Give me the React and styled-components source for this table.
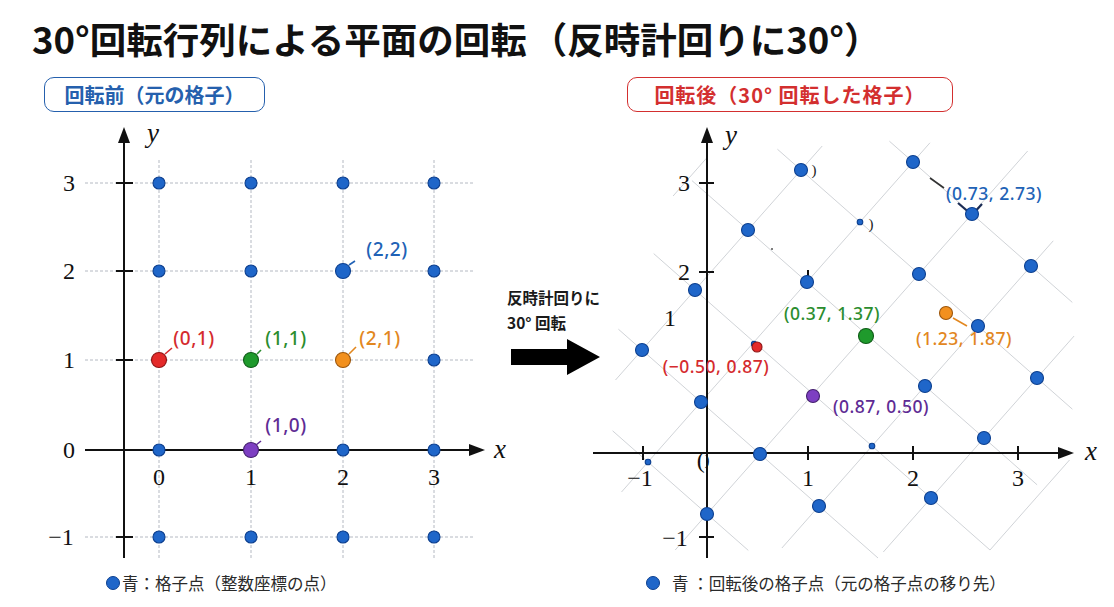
import React from "react";
import styled, { createGlobalStyle } from "styled-components";

const GlobalStyle = createGlobalStyle`
  html, body { margin: 0; padding: 0; background: #ffffff; }
  body { font-family: "Noto Sans CJK JP", "Noto Sans", sans-serif; }
`;

const TONES = {
  blue: { fill: "#1f66c9", stroke: "#0c3f8f", text: "#2162b6" },
  red: { fill: "#e42a2a", stroke: "#8e1414", text: "#d52b2e" },
  green: { fill: "#1f9a2c", stroke: "#0e5c16", text: "#2b8d2e" },
  orange: { fill: "#f2901e", stroke: "#9c560c", text: "#e2871f" },
  purple: { fill: "#7d3fc2", stroke: "#44206e", text: "#5e2b94" },
};

const Page = styled.div`
  width: 1114px;
  height: 607px;
  overflow: hidden;
  background: #ffffff;
`;

const Title = styled.h1`
  margin: 0;
  padding: 17px 0 0 32px;
  height: 77px;
  box-sizing: border-box;
  font-family: "Noto Sans CJK JP", sans-serif;
  font-size: 36.5px;
  line-height: 44px;
  font-weight: 700;
  color: #111111;
  white-space: nowrap;
`;

/* full-width opening bracket with the extra leading space the original shows */
const Open = styled.span`
  margin-left: ${(p) => p.$gap}px;
`;

const Stage = styled.div`
  display: grid;
  grid-template-columns: 495px 105px 514px;
`;

const Panel = styled.section`
  display: flex;
  flex-direction: column;
  align-items: flex-start;
`;

const Pill = styled.div`
  margin-left: ${(p) => p.$indent}px;
  width: ${(p) => p.$width}px;
  height: 35px;
  box-sizing: border-box;
  border: 1.5px solid ${(p) => p.$color};
  border-radius: 10px;
  display: flex;
  align-items: center;
  justify-content: center;
  color: ${(p) => p.$color};
  font-family: "Noto Sans CJK JP", sans-serif;
  font-size: 20px;
  font-weight: 700;
  letter-spacing: ${(p) => p.$spacing || 0}px;
  white-space: nowrap;
`;

const Chart = styled.svg`
  display: block;
  margin-top: 4px;
  overflow: visible;
`;

const Legend = styled.div`
  height: 30px;
  display: flex;
  align-items: center;
  gap: ${(p) => p.$gap}px;
  padding-left: ${(p) => p.$indent}px;
  font-family: "Noto Sans CJK JP", sans-serif;
  font-size: 16.5px;
  color: #2a2a2a;
  white-space: nowrap;
`;

const LegendDot = styled.span`
  width: 14px;
  height: 14px;
  border-radius: 50%;
  background: #1f66c9;
  border: 1px solid #0c3f8f;
  box-sizing: border-box;
  flex: none;
`;

const Middle = styled.div`
  display: flex;
  flex-direction: column;
  padding: 208px 0 0 12px;
`;

const Caption = styled.div`
  font-family: "Noto Sans CJK JP", sans-serif;
  font-size: 15.5px;
  line-height: 25px;
  font-weight: 700;
  color: #1a1a1a;
  white-space: nowrap;
`;

const ArrowSvg = styled.svg`
  display: block;
  margin: 2px 0 0 -2px;
`;

const GridLine = styled.line`
  stroke: #b4b9c2;
  stroke-width: 1;
  stroke-dasharray: 3 2;
`;

const LatticeLine = styled.line`
  stroke: #c8cbd0;
  stroke-width: 0.85;
`;

const Axis = styled.line`
  stroke: #111111;
  stroke-width: 2;
`;

const Tick = styled.line`
  stroke: #111111;
  stroke-width: 2;
`;

const Head = styled.polygon`
  fill: #111111;
`;

const Dot = styled.circle`
  fill: ${(p) => TONES[p.$tone].fill};
  stroke: ${(p) => TONES[p.$tone].stroke};
  stroke-width: 1.1;
`;

const Leader = styled.line`
  stroke: ${(p) => TONES[p.$tone].text};
  stroke-width: 1.6;
`;

const TickText = styled.text`
  font-family: "Liberation Serif", "DejaVu Serif", serif;
  font-size: ${(p) => p.$size || 24}px;
  fill: #111111;
  text-anchor: middle;
  dominant-baseline: central;
`;

const AxisName = styled.text`
  font-family: "Liberation Serif", "DejaVu Serif", serif;
  font-style: italic;
  font-size: 27px;
  fill: #111111;
  text-anchor: middle;
  dominant-baseline: central;
`;

const PointLabel = styled.text`
  font-family: "Noto Sans", "Open Sans", sans-serif;
  font-size: ${(p) => p.$size}px;
  font-weight: 500;
  letter-spacing: 0.5px;
  fill: ${(p) => TONES[p.$tone].text};
  text-anchor: middle;
  dominant-baseline: central;
`;

const Artifact = styled.text`
  font-family: "Liberation Serif", serif;
  font-size: 15px;
  fill: #222222;
  text-anchor: middle;
  dominant-baseline: central;
`;

/* ---------- left chart data ---------- */
const LX = [159, 251, 343, 434];
const LY = [183, 271, 360, 450, 537];
const LEFT_SPECIAL = [
  { x: 159, y: 360, tone: "red" },
  { x: 251, y: 360, tone: "green" },
  { x: 343, y: 360, tone: "orange" },
  { x: 251, y: 450, tone: "purple" },
  { x: 343, y: 271, tone: "blue" },
];
const LEFT_LABELS = [
  { t: "(0,1)", x: 194, y: 338, tone: "red", l: [165, 354, 172, 348] },
  { t: "(1,1)", x: 286, y: 338, tone: "green", l: [257, 354, 261, 350] },
  { t: "(2,1)", x: 380, y: 338, tone: "orange", l: [349, 354, 356, 347] },
  { t: "(2,2)", x: 387, y: 249, tone: "blue", l: [349, 265, 355, 261] },
  { t: "(1,0)", x: 286, y: 425, tone: "purple", l: [256, 445, 261, 441] },
];

/* ---------- right chart data ---------- */
const R0 = [760, 454];
const RA = [59, 52];
const RB = [53, -60];
const lat = (i, j) => [R0[0] + i * RA[0] + j * RB[0], R0[1] + i * RA[1] + j * RB[1]];

const B_LINES = [
  [-3, 1.7, 2.35],
  [-2, -0.5, 3.4],
  [-1, -1.5, 4.32],
  [0, -1.6, 5.05],
  [1, -0.7, 4.42],
  [2, 0.1, 3.7],
  [3, 1, 2.5],
];
const A_LINES = [
  [-1, -1.6, 0.7],
  [0, -2.4, 2.0],
  [1, -2.7, 3.0],
  [2, -2.95, 2.9],
  [3, -2.4, 2.6],
  [4, -1.4, 1.7],
];
const R_DOTS = [
  [-2, 0], [-2, 1], [-2, 2], [-2, 3],
  [-1, -1, 1], [-1, 0], [-1, 2], [-1, 3, 1], [-1, 4],
  [0, -1], [0, 0], [0, 3], [0, 4],
  [1, 0], [1, 1, 1], [1, 2], [1, 3], [1, 4],
  [2, 1], [2, 2], [2, 3],
];
const RIGHT_LABELS = [
  { t: "(0.73, 2.73)", x: 994, y: 193, tone: "blue" },
  { t: "(0.37, 1.37)", x: 832, y: 313, tone: "green" },
  { t: "(−0.50, 0.87)", x: 716, y: 366, tone: "red" },
  { t: "(0.87, 0.50)", x: 881, y: 406, tone: "purple" },
  { t: "(1.23, 1.87)", x: 964, y: 338, tone: "orange" },
];

function LeftChart() {
  return (
    <Chart width="495" height="452" viewBox="0 116 495 452">
      {LY.filter((y) => y !== 450).map((y) => (
        <GridLine key={"h" + y} x1="85" y1={y} x2="475" y2={y} />
      ))}
      {LX.map((x) => (
        <GridLine key={"v" + x} x1={x} y1="160" x2={x} y2="558" />
      ))}
      <Axis x1="124" y1="558" x2="124" y2="140" />
      <Head points="124,127 118,143 130,143" />
      <Axis x1="85" y1="450" x2="472" y2="450" />
      <Head points="485,450 469,444 469,456" />
      {[183, 271, 360, 537].map((y) => (
        <Tick key={"t" + y} x1="116" y1={y} x2="133" y2={y} />
      ))}
      <AxisName x="153" y="133">y</AxisName>
      <AxisName x="500" y="449">x</AxisName>
      {["3", "2", "1", "0"].map((t, k) => (
        <TickText key={"yl" + t} x="69" y={LY[k]}>{t}</TickText>
      ))}
      <TickText x="61" y="537">−1</TickText>
      {LX.map((x, k) => (
        <TickText key={"xl" + k} x={x} y="477">{k}</TickText>
      ))}
      {LX.flatMap((x) =>
        LY.map((y) => <Dot key={x + "-" + y} $tone="blue" cx={x} cy={y} r="6" />)
      )}
      {LEFT_SPECIAL.map((d) => (
        <Dot key={"s" + d.x + d.y} $tone={d.tone} cx={d.x} cy={d.y} r="7.5" />
      ))}
      {LEFT_LABELS.map((d) => (
        <g key={d.t}>
          <Leader $tone={d.tone} x1={d.l[0]} y1={d.l[1]} x2={d.l[2]} y2={d.l[3]} />
          <PointLabel $tone={d.tone} $size={19} x={d.x} y={d.y}>{d.t}</PointLabel>
        </g>
      ))}
    </Chart>
  );
}

function RightChart() {
  return (
    <Chart width="514" height="452" viewBox="600 116 514 452">
      {B_LINES.map(([i, t0, t1]) => {
        const p = lat(i, 0);
        return (
          <LatticeLine
            key={"b" + i}
            x1={p[0] + t0 * RB[0]}
            y1={p[1] + t0 * RB[1]}
            x2={p[0] + t1 * RB[0]}
            y2={p[1] + t1 * RB[1]}
          />
        );
      })}
      {A_LINES.map(([j, s0, s1]) => {
        const p = lat(0, j);
        return (
          <LatticeLine
            key={"a" + j}
            x1={p[0] + s0 * RA[0]}
            y1={p[1] + s0 * RA[1]}
            x2={p[0] + s1 * RA[0]}
            y2={p[1] + s1 * RA[1]}
          />
        );
      })}
      <Axis x1="707" y1="558" x2="707" y2="140" />
      <Head points="707,127 701,143 713,143" />
      <Axis x1="593" y1="453" x2="1060" y2="453" />
      <Head points="1074,453 1058,447 1058,459" />
      {[183, 272, 537].map((y) => (
        <Tick key={"rt" + y} x1="699" y1={y} x2="714" y2={y} />
      ))}
      {[643, 808, 913, 1018].map((x) => (
        <Tick key={"rx" + x} x1={x} y1="446" x2={x} y2="460" />
      ))}
      <AxisName x="731" y="135">y</AxisName>
      <AxisName x="1091" y="451">x</AxisName>
      <TickText x="684" y="183">3</TickText>
      <TickText x="684" y="272">2</TickText>
      <TickText x="670" y="318">1</TickText>
      <TickText x="675" y="538">−1</TickText>
      <TickText x="640" y="478">−1</TickText>
      <TickText x="808" y="478">1</TickText>
      <TickText x="913" y="478">2</TickText>
      <TickText x="1018" y="478">3</TickText>
      <TickText x="703" y="460">
        (<tspan fontSize="14">)</tspan>
      </TickText>
      <Artifact x="814" y="170">)</Artifact>
      <Artifact x="871" y="224">)</Artifact>
      <Tick x1="808" y1="270" x2="808" y2="279" />
      <circle cx="772" cy="249" r="1" fill="#555" />
      <line x1="930" y1="178" x2="944" y2="188" stroke="#333" strokeWidth="1.6" />
      <line x1="958" y1="203" x2="972" y2="215" stroke="#1b2c55" strokeWidth="2.2" />
      <line x1="982" y1="204" x2="972" y2="215" stroke="#1b2c55" strokeWidth="2.2" />
      {R_DOTS.map(([i, j, small]) => {
        const p = lat(i, j);
        return <Dot key={i + "_" + j} $tone="blue" cx={p[0]} cy={p[1]} r={small ? 2.8 : 6.5} />;
      })}
      <Dot $tone="blue" cx="754" cy="344" r="2.6" />
      <Dot $tone="red" cx="757" cy="347" r="5" />
      <Dot $tone="purple" cx="813" cy="396" r="6.5" />
      <Dot $tone="green" cx="866" cy="336" r="7.5" />
      <Dot $tone="orange" cx="946" cy="313" r="6.5" />
      <Leader $tone="orange" x1="953" y1="318" x2="967" y2="326" />
      {RIGHT_LABELS.map((d) => (
        <PointLabel key={d.t} $tone={d.tone} $size={17.5} x={d.x} y={d.y}>{d.t}</PointLabel>
      ))}
    </Chart>
  );
}

export default function App() {
  return (
    <Page>
      <GlobalStyle />
      <Title>
        30°回転行列による平面の回転<Open $gap={4}>（</Open>反時計回りに30°）
      </Title>
      <Stage>
        <Panel>
          <Pill $indent={44} $width={221} $color="#2560ad">回転前（元の格子）</Pill>
          <LeftChart />
          <Legend $indent={106} $gap={2}>
            <LegendDot />
            <span>青：格子点（整数座標の点）</span>
          </Legend>
        </Panel>
        <Middle>
          <Caption>反時計回りに</Caption>
          <Caption>30° 回転</Caption>
          <ArrowSvg width="95" height="40" viewBox="505 337 95 40">
            <polygon points="511,349 567,349 567,339 600,357 567,375 567,365 511,365" fill="#000" />
          </ArrowSvg>
        </Middle>
        <Panel>
          <Pill $indent={27} $width={326} $color="#d32f2f" $spacing={1}>
            回転後（30° 回転した格子）
          </Pill>
          <RightChart />
          <Legend $indent={46} $gap={12}>
            <LegendDot />
            <span>青 ：回転後の格子点（元の格子点の移り先）</span>
          </Legend>
        </Panel>
      </Stage>
    </Page>
  );
}
